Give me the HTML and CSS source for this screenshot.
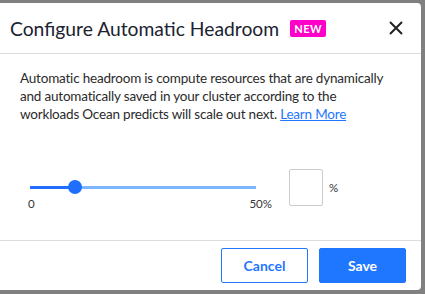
FILE: index.html
```html
<!DOCTYPE html>
<html lang="en">
<head>
    <meta charset="UTF-8">
    <title>Configure Automatic Headroom</title>
    <link rel="stylesheet" href="styles.css">
</head>
<body>

<div class="modal">
    <div class="modal-header">
        <h2 class="modal-title">Configure Automatic Headroom</h2>
        <span class="badge-new">NEW</span>
        <button class="close-btn" aria-label="Close">
            <svg width="14" height="14" viewBox="0 0 14 14">
                <path d="M1 1 L13 13 M13 1 L1 13" stroke="#222" stroke-width="2" fill="none"/>
            </svg>
        </button>
    </div>

    <div class="modal-body">
        <p class="description">Automatic headroom is compute resources that are dynamically and automatically saved in your cluster according to the<br>workloads Ocean predicts will scale out next. <a href="#">Learn More</a></p>

        <div class="headroom-row">
            <div class="slider">
                <div class="track">
                    <div class="track-fill" style="width: 20%"></div>
                    <div class="thumb" style="left: 20%"></div>
                </div>
                <div class="slider-labels">
                    <span>0</span>
                    <span>50%</span>
                </div>
            </div>
            <input class="percent-input" type="text">
            <span class="percent-sign">%</span>
        </div>
    </div>

    <div class="modal-footer">
        <button class="btn btn-outline">Cancel</button>
        <button class="btn btn-primary">Save</button>
    </div>
</div>

</body>
</html>
```

FILE: styles.css
```css
body {
    margin: 0;
    padding: 0;
    background-color: #808080;
    font-family: "Lato", "Liberation Sans", sans-serif;
    color: #2b2b2b;
}

.modal {
    width: 421px;
    height: 287px;
    margin-top: 3px;
    background-color: #fff;
    border-radius: 0 4px 4px 0;
    display: flex;
    flex-direction: column;
}

.modal-header {
    height: 50px;
    display: flex;
    align-items: center;
    padding: 0 18px 0 10px;
    border-bottom: 1px solid #dcdcdc;
}

.modal-title {
    margin: 0;
    font-size: 19.3px;
    font-weight: 400;
    color: #1b2230;
}

.badge-new {
    margin-left: 11px;
    background-color: #ff00c8;
    color: #fff;
    font-size: 11px;
    font-weight: 700;
    letter-spacing: 0.5px;
    padding: 2px 4px;
    border-radius: 2px;
}

.close-btn {
    margin-left: auto;
    background: none;
    border: none;
    padding: 0;
    display: flex;
}

.modal-body {
    flex: 1;
    padding: 0 21px 0 20px;
    border-bottom: 1px solid #dcdcdc;
}

.description {
    margin: 15px 0 0;
    font-size: 13.5px;
    letter-spacing: -0.2px;
    line-height: 18px;
    color: #2b2b2b;
}

.description a {
    color: #1f76ff;
    text-decoration: underline;
}

.headroom-row {
    display: flex;
    align-items: flex-start;
    margin-top: 46px;
}

.slider {
    width: 226px;
    margin-left: 10px;
    padding-top: 17px;
}

.track {
    position: relative;
    height: 3px;
    background-color: #7db6ff;
}

.track-fill {
    height: 3px;
    background-color: #1f6eff;
}

.thumb {
    position: absolute;
    top: -6px;
    width: 14px;
    height: 14px;
    margin-left: -7px;
    border-radius: 50%;
    background-color: #1f6eff;
}

.slider-labels {
    display: flex;
    justify-content: space-between;
    margin: 8px -16px 0 -2px;
    font-size: 11.5px;
    color: #333;
}

.percent-input {
    width: 34px;
    height: 37px;
    margin-left: 33px;
    padding: 0;
    border: 1px solid #ccc;
    border-radius: 2px;
    box-sizing: border-box;
}

.percent-sign {
    margin: 12px 0 0 6px;
    font-size: 11.5px;
    color: #333;
}

.modal-footer {
    height: 49px;
    display: flex;
    justify-content: flex-end;
    align-items: center;
    gap: 11px;
    padding: 0 15px;
}

.btn {
    width: 87px;
    height: 35px;
    font-family: inherit;
    font-size: 14px;
    font-weight: 700;
    border-radius: 2px;
}

.btn-outline {
    background-color: #fff;
    color: #1f76ff;
    border: 1px solid #1f76ff;
}

.btn-primary {
    background-color: #1f76ff;
    color: #fff;
    border: 1px solid #1f76ff;
}
```
